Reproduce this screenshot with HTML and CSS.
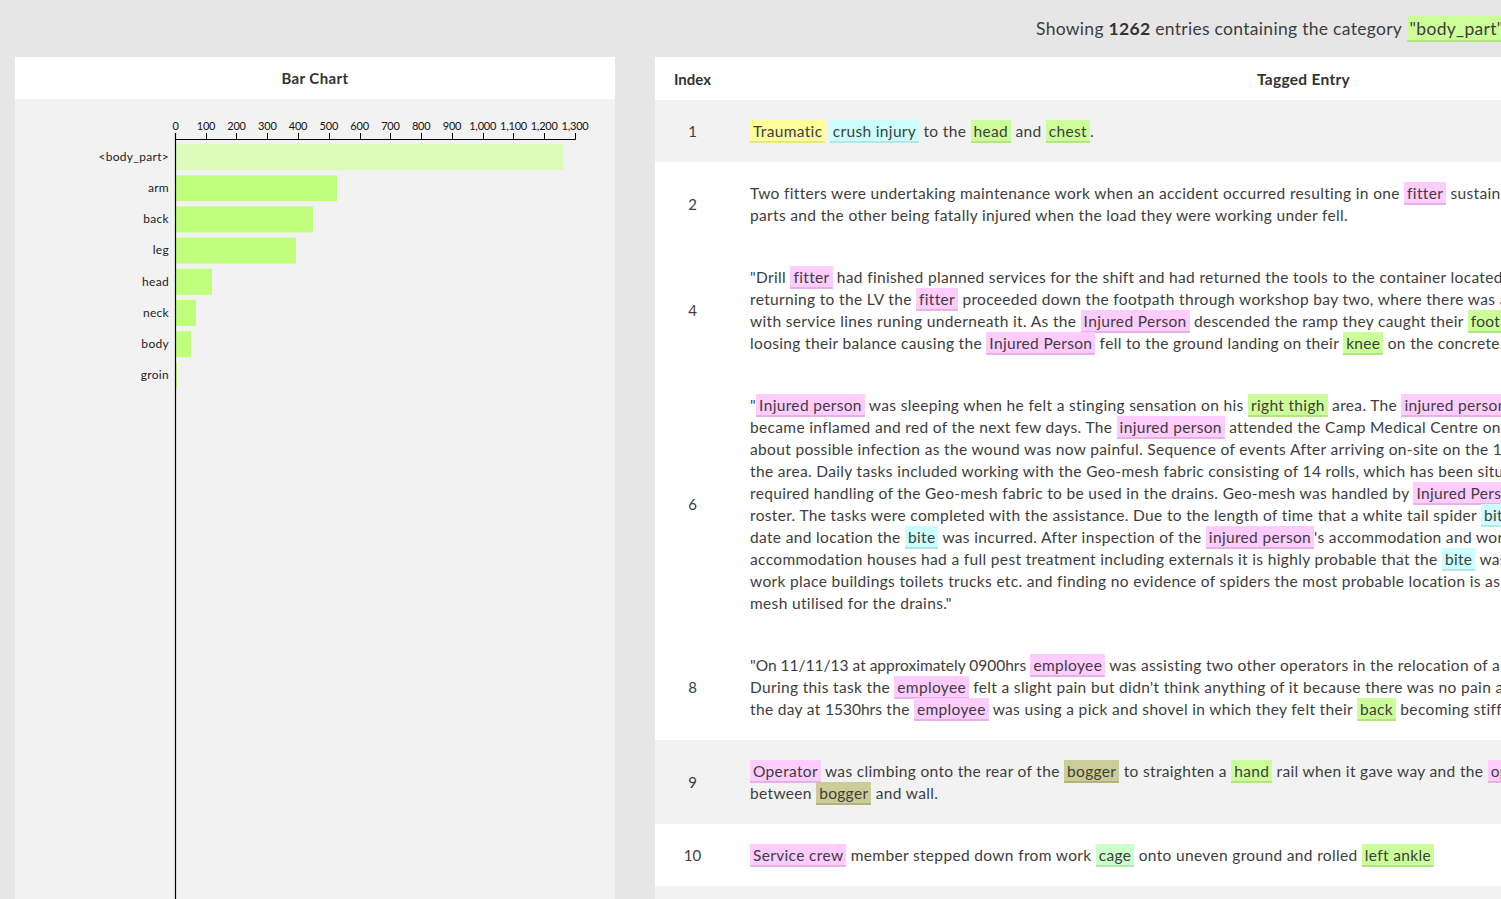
FILE: index.html
```
<!DOCTYPE html>
<html>
<head>
<meta charset="utf-8">
<link rel="stylesheet" href="styles.css">
</head>
<body>
<div class="page">
  <div class="topbar">
    <div class="spacer"></div>
    <div class="summary">Showing <b>1262</b> entries containing the category <span class="tag green">"body_part" </span> in the current dataset</div>
  </div>
  <div class="columns">
    <section class="panel chart-panel">
      <header class="panel-head">Bar Chart</header>
      <div class="chart-body">
        <svg class="chart" width="600" height="800" viewBox="0 0 600 800">
          <g class="bars">
            <rect x="160" y="45" width="388" height="26" fill="#dcfab9"/>
            <rect x="160" y="76.2" width="162" height="26" fill="#bfff7b"/>
            <rect x="160" y="107.4" width="138" height="26" fill="#bfff7b"/>
            <rect x="160" y="138.6" width="121" height="26" fill="#bfff7b"/>
            <rect x="160" y="169.8" width="37" height="26" fill="#bfff7b"/>
            <rect x="160" y="201" width="21" height="26" fill="#bfff7b"/>
            <rect x="160" y="232.2" width="16" height="26" fill="#bfff7b"/>
            <rect x="160" y="263.4" width="2" height="26" fill="#bfff7b"/>
          </g>
          <g class="ylabels">
            <text x="154" y="62">&lt;body_part&gt;</text>
            <text x="154" y="93">arm</text>
            <text x="154" y="124">back</text>
            <text x="154" y="155">leg</text>
            <text x="154" y="187">head</text>
            <text x="154" y="218">neck</text>
            <text x="154" y="249">body</text>
            <text x="154" y="280">groin</text>
          </g>
          <g class="xaxis">
            <path d="M160.5,34V40.5H560.5V34" fill="none" stroke="#000"/>
            <path d="M191.5,34V40M221.5,34V40M252.5,34V40M283.5,34V40M314.5,34V40M345.5,34V40M375.5,34V40M406.5,34V40M437.5,34V40M468.5,34V40M498.5,34V40M529.5,34V40" stroke="#000"/>
            <text x="160.5" y="31">0</text>
            <text x="191" y="31">100</text>
            <text x="221.5" y="31">200</text>
            <text x="252.3" y="31">300</text>
            <text x="283" y="31">400</text>
            <text x="313.8" y="31">500</text>
            <text x="344.6" y="31">600</text>
            <text x="375.4" y="31">700</text>
            <text x="406.2" y="31">800</text>
            <text x="437" y="31">900</text>
            <text x="467.7" y="31">1,000</text>
            <text x="498.5" y="31">1,100</text>
            <text x="529.2" y="31">1,200</text>
            <text x="560" y="31">1,300</text>
          </g>
          <path d="M160.5,34V800" stroke="#000" stroke-width="1.2"/>
        </svg>
      </div>
    </section>
    <section class="panel table-panel">
      <div class="table-head">
        <div class="col-index">Index</div>
        <div class="col-entry head-entry">Tagged Entry</div>
      </div>
      <div class="row odd">
        <div class="col-index">1</div>
        <div class="col-entry"><span class="tag yellow">Traumatic</span> <span class="tag cyan">crush injury</span> to the <span class="tag green">head</span> and <span class="tag green">chest</span>.</div>
      </div>
      <div class="row even">
        <div class="col-index">2</div>
        <div class="col-entry">Two fitters were undertaking maintenance work when an accident occurred resulting in one <span class="tag pink">fitter</span> sustaining serious injuries to various body<br>parts and the other being fatally injured when the load they were working under fell.</div>
      </div>
      <div class="row even">
        <div class="col-index">4</div>
        <div class="col-entry">"Drill <span class="tag pink">fitter</span> had finished planned services for the shift and had returned the tools to the container located behind the workshop. On<br>returning to the LV the <span class="tag pink">fitter</span> proceeded down the footpath through workshop bay two, where there was a concrete ramp<br>with service lines runing underneath it. As the <span class="tag pink">Injured Person</span> descended the ramp they caught their <span class="tag green">foot</span> on the edge of a service line<br>loosing their balance causing the <span class="tag pink">Injured Person</span> fell to the ground landing on their <span class="tag green">knee</span> on the concrete."</div>
      </div>
      <div class="row even">
        <div class="col-index">6</div>
        <div class="col-entry">"<span class="tag pink">Injured person</span> was sleeping when he felt a stinging sensation on his <span class="tag green">right thigh</span> area. The <span class="tag pink">injured person</span> noticed the area<br>became inflamed and red of the next few days. The <span class="tag pink">injured person</span> attended the Camp Medical Centre on the 12th with concerns<br>about possible infection as the wound was now painful. Sequence of events After arriving on-site on the 14th the crew were briefed on<br>the area. Daily tasks included working with the Geo-mesh fabric consisting of 14 rolls, which has been situated in the laydown yard. Work<br>required handling of the Geo-mesh fabric to be used in the drains. Geo-mesh was handled by <span class="tag pink">Injured Person</span> for the whole of the<br>roster. The tasks were completed with the assistance. Due to the length of time that a white tail spider <span class="tag cyan">bite</span> takes to show, the exact<br>date and location the <span class="tag cyan">bite</span> was incurred. After inspection of the <span class="tag pink">injured person</span>'s accommodation and work areas, and as the<br>accommodation houses had a full pest treatment including externals it is highly probable that the <span class="tag cyan">bite</span> was incurred at work. After checking<br>work place buildings toilets trucks etc. and finding no evidence of spiders the most probable location is as a result of handling the Geo-<br>mesh utilised for the drains."</div>
      </div>
      <div class="row even">
        <div class="col-index">8</div>
        <div class="col-entry"><span class="num">"On 11/11/13 at approximately 0900hrs</span> <span class="tag pink">employee</span> was assisting two other operators in the relocation of a <span class="tag mint">pump</span> from the sump.<br>During this task the <span class="tag pink">employee</span> felt a slight pain but didn't think anything of it because there was no pain afterwards. Later in<br>the day at <span class="num">1530hrs</span> the <span class="tag pink">employee</span> was using a pick and shovel in which they felt their <span class="tag green">back</span> becoming stiffer and more sore."</div>
      </div>
      <div class="row odd">
        <div class="col-index">9</div>
        <div class="col-entry"><span class="tag pink">Operator</span> was climbing onto the rear of the <span class="tag olive">bogger</span> to straighten a <span class="tag green">hand</span> rail when it gave way and the <span class="tag pink">operator</span> was caught<br>between <span class="tag olive">bogger</span> and wall.</div>
      </div>
      <div class="row even">
        <div class="col-index">10</div>
        <div class="col-entry"><span class="tag pink">Service crew</span> member stepped down from work <span class="tag mint">cage</span> onto uneven ground and rolled <span class="tag green">left ankle</span></div>
      </div>
      <div class="row odd">
        <div class="col-index">11</div>
        <div class="col-entry"><span class="tag pink">Worker</span> strained <span class="tag green">shoulder</span> while lifting a hose.</div>
      </div>
    </section>
  </div>
</div>
</body>
</html>
```
FILE: styles.css
```
html, body {
  margin: 0;
  padding: 0;
  overflow: hidden;
  height: 100%;
}
body {
  background: #e6e6e6;
  font-family: Lato, "Open Sans", sans-serif;
  color: #3d3d3d;
}
.page {
  padding-left: 15px;
  width: 1900px;
}
.topbar {
  height: 57px;
  display: flex;
  align-items: center;
}
.spacer {
  width: 1021px;
  flex: none;
}
.summary {
  font-size: 17.5px;
  letter-spacing: 0.3px;
  color: #3d3d3d;
  white-space: nowrap;
  margin-top: -1px;
}
.summary b {
  color: #333;
}
.columns {
  display: flex;
  gap: 40px;
  align-items: stretch;
}
.panel {
  flex: none;
  min-height: 842px;
  background: #f2f2f2;
}
.chart-panel {
  width: 600px;
}
.panel-head {
  height: 42px;
  line-height: 42px;
  background: #fff;
  text-align: center;
  font-weight: 700;
  font-size: 15px;
  letter-spacing: 0.4px;
  color: #333;
}
.chart {
  display: block;
}
.chart text {
  font-family: Lato, sans-serif;
  font-size: 12px;
  letter-spacing: 0.3px;
  fill: #222;
}
.ylabels text {
  text-anchor: end;
}
.xaxis text {
  text-anchor: middle;
  font-size: 11px;
  letter-spacing: -0.2px;
  fill: #111;
}
.table-panel {
  width: 1222px;
  background: #f2f2f2;
}
.table-head {
  display: flex;
  height: 43px;
  align-items: center;
  background: #fff;
  font-weight: 700;
  color: #333;
}
.table-head .col-entry {
  font-size: 15.5px;
  letter-spacing: 0.3px;
}
.col-index {
  width: 75px;
  flex: none;
  text-align: center;
  font-size: 15px;
}
.col-entry {
  flex: 1;
  padding: 0 20px;
  white-space: nowrap;
  font-size: 15.5px;
  letter-spacing: 0.34px;
  line-height: 22px;
}
.num {
  letter-spacing: 0;
}
.head-entry {
  text-align: center;
}
.row {
  display: flex;
  align-items: center;
  padding: 20px 0;
}
.row .col-index {
  color: #3d3d3d;
}
.row.odd {
  background: #f2f2f2;
}
.row.even {
  background: #fff;
}
.tag {
  padding: 2px 3px 1px;
  border-bottom: 2px solid;
}
.tag.yellow { background: #ffff99; border-color: #e6e68a; }
.tag.cyan { background: #ccffff; border-color: #b3e6e6; }
.tag.green { background: #ccff99; border-color: #b3e680; }
.tag.pink { background: #ffccff; border-color: #e6b3e6; }
.tag.olive { background: #cccc99; border-color: #b3b380; }
.tag.mint { background: #ccffcc; border-color: #b3e6b3; }
```
